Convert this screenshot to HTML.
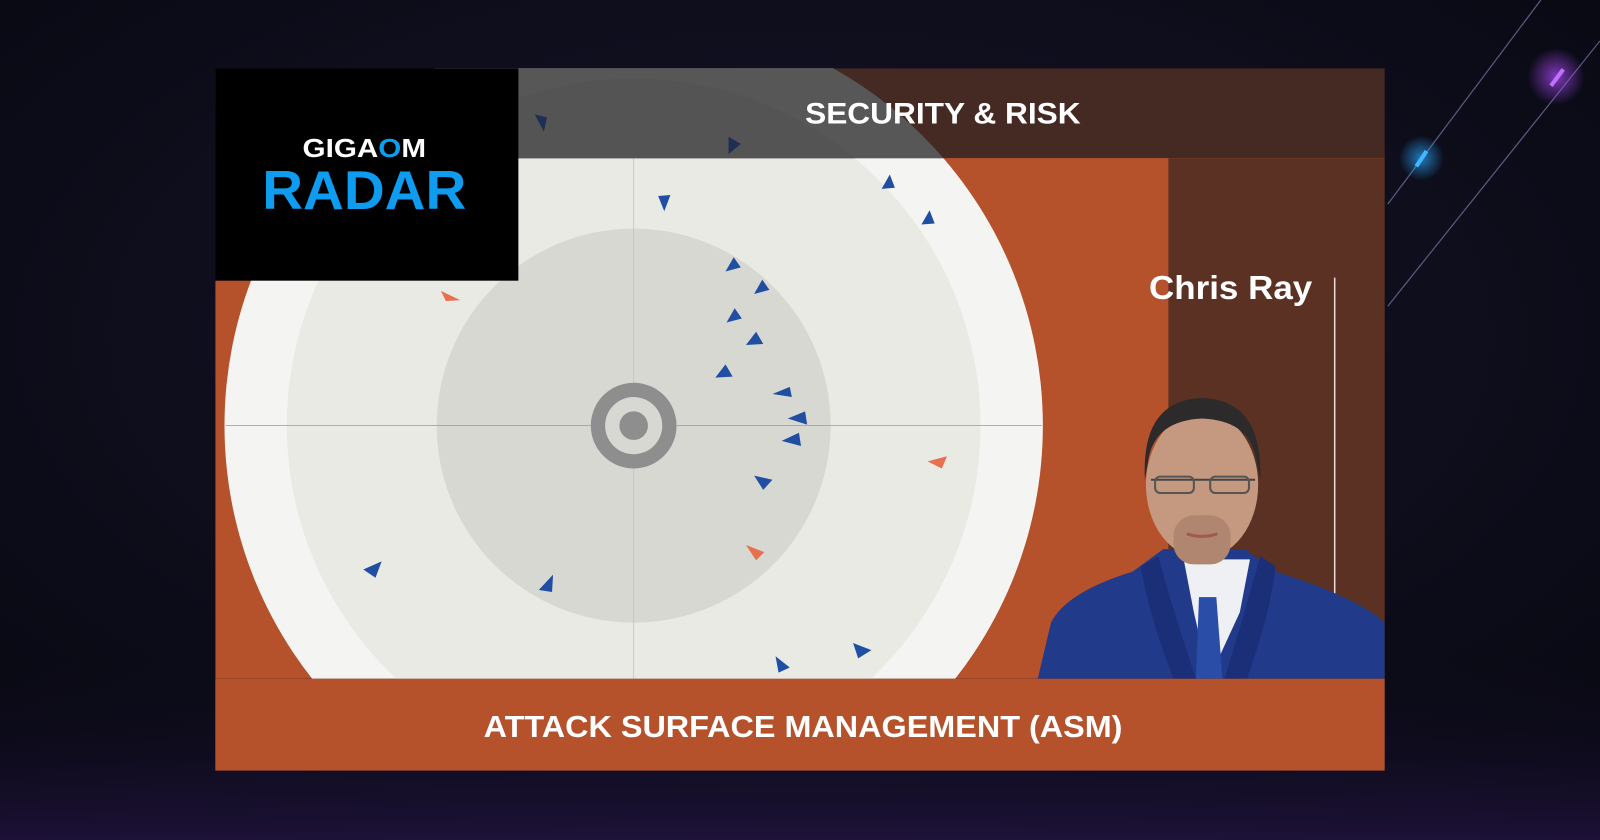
<!DOCTYPE html>
<html><head><meta charset="utf-8"><style>
html,body{margin:0;padding:0;background:#0b0b16;overflow:hidden}
svg{display:block}
</style></head><body>
<svg width="1600" height="840" viewBox="0 0 1568 823" preserveAspectRatio="none" xmlns="http://www.w3.org/2000/svg">
<defs>
<radialGradient id="bg" cx="0.5" cy="0.4" r="0.8">
<stop offset="0" stop-color="#15152a"/><stop offset="1" stop-color="#07070f"/>
</radialGradient>
<linearGradient id="bot" x1="0" y1="0" x2="0" y2="1">
<stop offset="0" stop-color="#0b0b16" stop-opacity="0"/><stop offset="1" stop-color="#2a1750"/>
</linearGradient>
<clipPath id="card"><rect x="211" y="67" width="1146" height="598"/></clipPath>
<clipPath id="hdr"><rect x="211" y="67" width="1146" height="88"/></clipPath>
<radialGradient id="glow" cx="0.5" cy="0.5" r="0.5"><stop offset="0" stop-color="#b04cff" stop-opacity="0.7"/><stop offset="1" stop-color="#b04cff" stop-opacity="0"/></radialGradient>
<radialGradient id="glow2" cx="0.5" cy="0.5" r="0.5"><stop offset="0" stop-color="#2aa8ff" stop-opacity="0.7"/><stop offset="1" stop-color="#2aa8ff" stop-opacity="0"/></radialGradient>
</defs>
<rect width="1568" height="823" fill="url(#bg)"/>
<rect y="640" width="1568" height="183" fill="url(#bot)" opacity="0.6"/>
<line x1="1360" y1="200" x2="1510" y2="0" stroke="#5a5a80" stroke-width="1.2"/>
<line x1="1360" y1="300" x2="1568" y2="40" stroke="#5a5a80" stroke-width="1.2"/>
<circle cx="1525" cy="75" r="28" fill="url(#glow)"/>
<line x1="1520" y1="84" x2="1532" y2="68" stroke="#c070ff" stroke-width="4"/>
<circle cx="1393" cy="155" r="22" fill="url(#glow2)"/>
<line x1="1388" y1="163" x2="1398" y2="148" stroke="#40b8ff" stroke-width="4"/>

<g clip-path="url(#card)">
<rect x="211" y="67" width="1146" height="598" fill="#b5522c"/>
<circle cx="621" cy="417" r="401" fill="#f4f4f2"/>
<circle cx="621" cy="417" r="340" fill="#eaeae5"/>
<circle cx="621" cy="417" r="193" fill="#d8d8d2"/>
<line x1="221" y1="417" x2="1021" y2="417" stroke="#9a9a9a" stroke-width="0.8"/>
<line x1="621" y1="67" x2="621" y2="665" stroke="#c4c4c0" stroke-width="0.8"/>
<circle cx="621" cy="417" r="42" fill="#8e8e8e"/>
<circle cx="621" cy="417" r="28" fill="#d8d8d2"/>
<circle cx="621" cy="417" r="14" fill="#8e8e8e"/>
<g clip-path="url(#hdr)">
<rect x="211" y="67" width="1146" height="88" fill="#442a22"/>
<circle cx="621" cy="417" r="401" fill="#575757"/>
<circle cx="621" cy="417" r="340" fill="#545454"/>
</g>
<g fill="#1f4ea3">
<path d="M524 112 l12 3 -3 14 z" fill="#1f2e55"/><path d="M714 134 l12 7 -12 10 z" fill="#1f2e55"/>
<path d="M645 192 l12 -1 -6 16 z"/><path d="M864 185 l8 -14 5 13 z"/>
<path d="M903 220 l8 -14 5 13 z"/><path d="M711 266 l8 -14 7 10 z"/>
<path d="M739 288 l8 -14 7 10 z"/><path d="M712 316 l8 -14 7 10 z"/>
<path d="M731 338 l10 -13 7 12 z"/><path d="M701 370 l10 -13 7 12 z"/>
<path d="M757 386 l17 -7 2 10 z"/><path d="M772 410 l17 -7 2 13 z"/>
<path d="M766 432 l17 -8 2 13 z"/><path d="M739 466 l18 4 -9 10 z"/>
<path d="M356 558 l18 -8 -6 16 z"/><path d="M528 578 l14 -15 -1 17 z"/>
<path d="M836 630 l18 7 -13 8 z"/><path d="M760 643 l14 11 -11 5 z"/>
</g>
<g fill="#e8704e">
<path d="M432 285 l19 9 -14 1 z"/><path d="M909 452 l19 -5 -5 12 z"/><path d="M731 534 l18 7 -8 8 z"/>
</g>
<rect x="1145" y="155" width="212" height="510" fill="#5a3122"/>
<line x1="1308" y1="272" x2="1308" y2="585" stroke="#e8dcd6" stroke-width="1.5"/>
<!-- person -->
<path d="M1017 665 L1030 610 Q1045 580 1110 560 L1140 538 L1220 538 L1250 560 Q1330 585 1357 610 L1357 665 Z" fill="#213a8a"/>
<path d="M1160 548 L1225 548 L1215 600 L1185 665 L1170 600 Z" fill="#eef0f4"/>
<path d="M1175 585 L1192 585 L1198 665 L1172 665 Z" fill="#2a4da8"/>
<path d="M1135 545 Q1150 600 1172 665 L1150 665 Q1125 600 1118 555 Z" fill="#1a2f78"/>
<path d="M1235 545 Q1220 600 1200 665 L1222 665 Q1245 600 1250 555 Z" fill="#1a2f78"/>
<ellipse cx="1178" cy="475" rx="55" ry="72" fill="#c59880"/>
<rect x="1150" y="505" width="56" height="48" rx="20" fill="#b08670"/>
<path d="M1122 470 Q1118 392 1178 390 Q1238 392 1235 470 L1230 445 Q1222 412 1178 410 Q1134 412 1126 447 Z" fill="#2c2a2a"/>
<path d="M1128 470 h102" stroke="#444" stroke-width="2" fill="none"/>
<rect x="1132" y="467" width="38" height="16" rx="5" fill="none" stroke="#555" stroke-width="2"/>
<rect x="1186" y="467" width="38" height="16" rx="5" fill="none" stroke="#555" stroke-width="2"/>
<path d="M1163 523 q15 5 30 0" stroke="#a05a50" stroke-width="3" fill="none"/>
</g>
<rect x="211" y="665" width="1146" height="90" fill="#b5522c"/>
<rect x="211" y="67" width="297" height="208" fill="#000"/>
<text x="357" y="154" text-anchor="middle" font-family="Liberation Sans, sans-serif" font-weight="bold" font-size="25" fill="#fff" textLength="121" lengthAdjust="spacingAndGlyphs">GIGA<tspan fill="#0d9cf0">O</tspan>M</text>
<text x="357" y="205" text-anchor="middle" font-family="Liberation Sans, sans-serif" font-weight="bold" font-size="54" fill="#0d9cf0" textLength="200" lengthAdjust="spacingAndGlyphs">RADAR</text>
<text x="924" y="121" text-anchor="middle" font-family="Liberation Sans, sans-serif" font-weight="bold" font-size="29" fill="#fff" textLength="270" lengthAdjust="spacingAndGlyphs">SECURITY &amp; RISK</text>
<text x="1206" y="293" text-anchor="middle" font-family="Liberation Sans, sans-serif" font-weight="bold" font-size="33" fill="#fff" textLength="160" lengthAdjust="spacingAndGlyphs">Chris Ray</text>
<text x="787" y="722" text-anchor="middle" font-family="Liberation Sans, sans-serif" font-weight="bold" font-size="30" fill="#fff" textLength="626" lengthAdjust="spacingAndGlyphs">ATTACK SURFACE MANAGEMENT (ASM)</text>
</svg>
</body></html>
